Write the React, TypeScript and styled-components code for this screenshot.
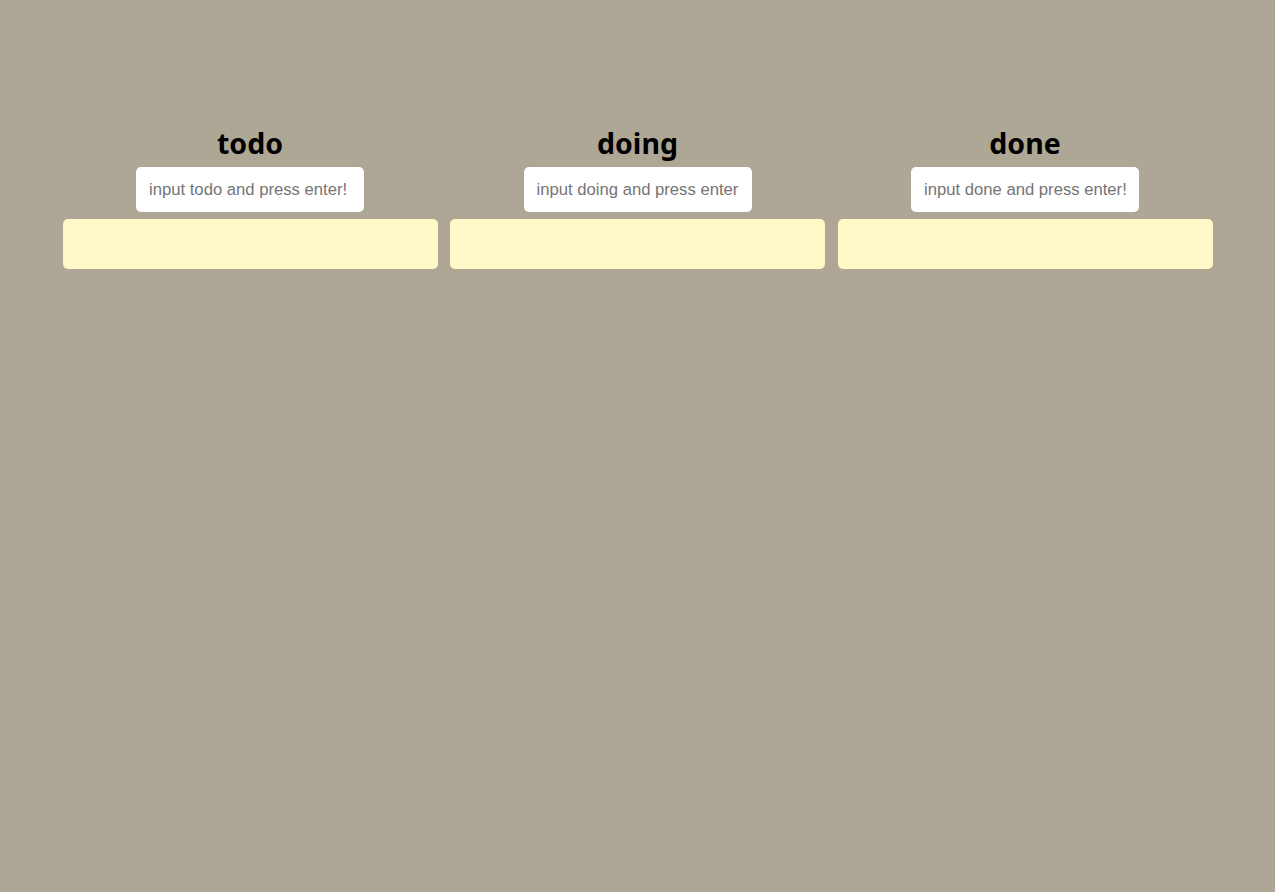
import React from "react";
import styled, { createGlobalStyle } from "styled-components";

const Global = createGlobalStyle`
  html, body { margin: 0; padding: 0; }
  body { background: #afa795; font-family: "Noto Sans", sans-serif; }
`;

const Wrapper = styled.div`
  display: flex;
  justify-content: center;
  align-items: flex-start;
  width: 100%;
  min-height: 100vh;
  padding-top: 122px;
  box-sizing: border-box;
`;

const Boards = styled.div`
  display: grid;
  grid-template-columns: repeat(3, 375px);
  column-gap: 12.5px;
`;

const Board = styled.div`
  display: flex;
  flex-direction: column;
  align-items: center;
`;

const Title = styled.h2`
  margin: 0;
  font-family: "Noto Sans", sans-serif;
  font-weight: 700;
  font-size: 28.5px;
  line-height: 42px;
  color: #000;
`;

const Form = styled.form`
  margin-top: 3px;
  display: flex;
  justify-content: center;
`;

const Input = styled.input`
  width: 228px;
  height: 45px;
  box-sizing: border-box;
  border: none;
  border-radius: 5px;
  background: #fff;
  padding: 0 13px;
  font-family: "Liberation Sans", Arial, sans-serif;
  font-size: 16.66px;
  outline: none;
  &::placeholder { color: #757575; }
`;

const Area = styled.div`
  margin-top: 7px;
  width: 100%;
  height: 50px;
  background: #fff8c9;
  border-radius: 5px;
`;

const boards = ["todo", "doing", "done"];

export default function App() {
  return (
    <>
      <Global />
      <Wrapper>
        <Boards>
          {boards.map((b) => (
            <Board key={b}>
              <Title>{b}</Title>
              <Form onSubmit={(e) => e.preventDefault()}>
                <Input placeholder={`input ${b} and press enter!`} />
              </Form>
              <Area />
            </Board>
          ))}
        </Boards>
      </Wrapper>
    </>
  );
}
